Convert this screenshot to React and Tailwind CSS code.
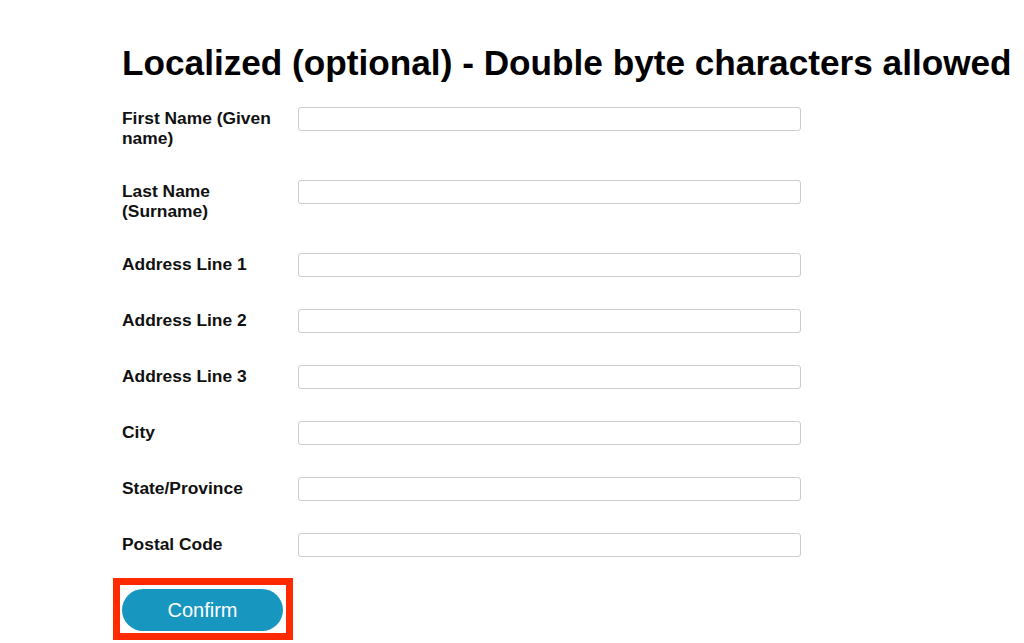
export default function App() {
  const fields = [
    "First Name (Given name)",
    "Last Name (Surname)",
    "Address Line 1",
    "Address Line 2",
    "Address Line 3",
    "City",
    "State/Province",
    "Postal Code",
  ];
  return (
    <div
      className="min-h-[643px] w-[1024px] bg-white pl-[122px] pt-[43px] text-black"
      style={{ fontFamily: '"Liberation Sans", Arial, Helvetica, sans-serif' }}
    >
      <h1 className="whitespace-nowrap text-[35.2px] font-bold leading-[40px]">
        Localized (optional) - Double byte characters allowed
      </h1>
      <div className="mt-[24px] flex flex-col gap-[32px]">
        {fields.map((f) => (
          <div key={f} className="flex items-start">
            <label className="w-[160px] shrink-0 pt-[1px] text-[17.4px] font-bold leading-[20px] text-[#111]">
              {f}
            </label>
            <input
              type="text"
              className="ml-[16px] h-[24px] w-[503px] rounded-[3px] border border-[#cccccc] bg-white"
            />
          </div>
        ))}
      </div>
      <div className="-ml-[9px] mt-[21px] inline-block border-[7px] border-[#ff2a00] pb-[2px] pl-[2px] pr-[3px] pt-[4px]">
        <button className="flex h-[42px] w-[161px] items-center justify-center rounded-full bg-[#1797c0] text-[20px] text-white">
          Confirm
        </button>
      </div>
    </div>
  );
}
